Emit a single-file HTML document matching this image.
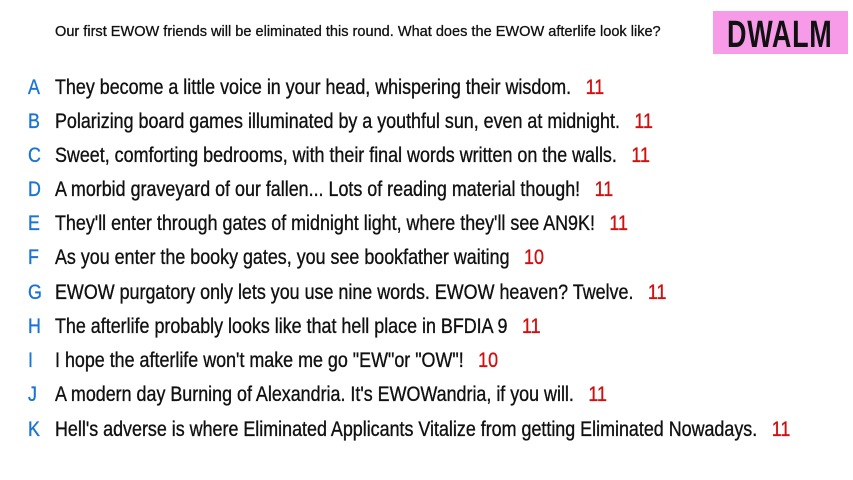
<!DOCTYPE html>
<html><head><meta charset="utf-8"><style>
body{margin:0;width:853px;height:480px;background:#fff;position:relative;overflow:hidden;font-family:"Liberation Sans Narrow","Liberation Sans",sans-serif;}
.q{position:absolute;left:55px;top:23px;font-size:15px;color:#111;transform:scaleX(0.97);transform-origin:left top;white-space:nowrap;-webkit-text-stroke:0.3px #111}
.box{position:absolute;left:713px;top:11px;width:135px;height:43px;background:#f79be9;}
.box span{position:absolute;left:14px;top:3px;font-size:38px;font-weight:bold;color:#111;transform:scaleX(0.71);transform-origin:left top;letter-spacing:1px}
.r{position:absolute;left:28px;height:26px;white-space:nowrap;font-size:21px;color:#111;-webkit-text-stroke:0.35px currentColor}
.l{position:absolute;left:0;color:#1a74d6;transform:scaleX(0.85);transform-origin:left top}
.t{position:absolute;left:27px;transform:scaleX(0.852);transform-origin:left top}
.n{color:#d01010;margin-left:17px}
</style></head><body>
<div class="q">Our first EWOW friends will be eliminated this round. What does the EWOW afterlife look like?</div>
<div class="box"><span>DWALM</span></div>
<div class="r" style="top:76px"><span class="l">A</span><span class="t">They become a little voice in your head, whispering their wisdom.<span class="n">11</span></span></div>
<div class="r" style="top:110px"><span class="l">B</span><span class="t">Polarizing board games illuminated by a youthful sun, even at midnight.<span class="n">11</span></span></div>
<div class="r" style="top:144px"><span class="l">C</span><span class="t">Sweet, comforting bedrooms, with their final words written on the walls.<span class="n">11</span></span></div>
<div class="r" style="top:178px"><span class="l">D</span><span class="t">A morbid graveyard of our fallen... Lots of reading material though!<span class="n">11</span></span></div>
<div class="r" style="top:212px"><span class="l">E</span><span class="t">They'll enter through gates of midnight light, where they'll see AN9K!<span class="n">11</span></span></div>
<div class="r" style="top:246px"><span class="l">F</span><span class="t">As you enter the booky gates, you see bookfather waiting<span class="n">10</span></span></div>
<div class="r" style="top:281px"><span class="l">G</span><span class="t">EWOW purgatory only lets you use nine words. EWOW heaven? Twelve.<span class="n">11</span></span></div>
<div class="r" style="top:315px"><span class="l">H</span><span class="t">The afterlife probably looks like that hell place in BFDIA 9<span class="n">11</span></span></div>
<div class="r" style="top:349px"><span class="l">I</span><span class="t">I hope the afterlife won't make me go "EW"or "OW"!<span class="n">10</span></span></div>
<div class="r" style="top:383px"><span class="l">J</span><span class="t">A modern day Burning of Alexandria. It's EWOWandria, if you will.<span class="n">11</span></span></div>
<div class="r" style="top:418px"><span class="l">K</span><span class="t">Hell's adverse is where Eliminated Applicants Vitalize from getting Eliminated Nowadays.<span class="n">11</span></span></div>
</body></html>
